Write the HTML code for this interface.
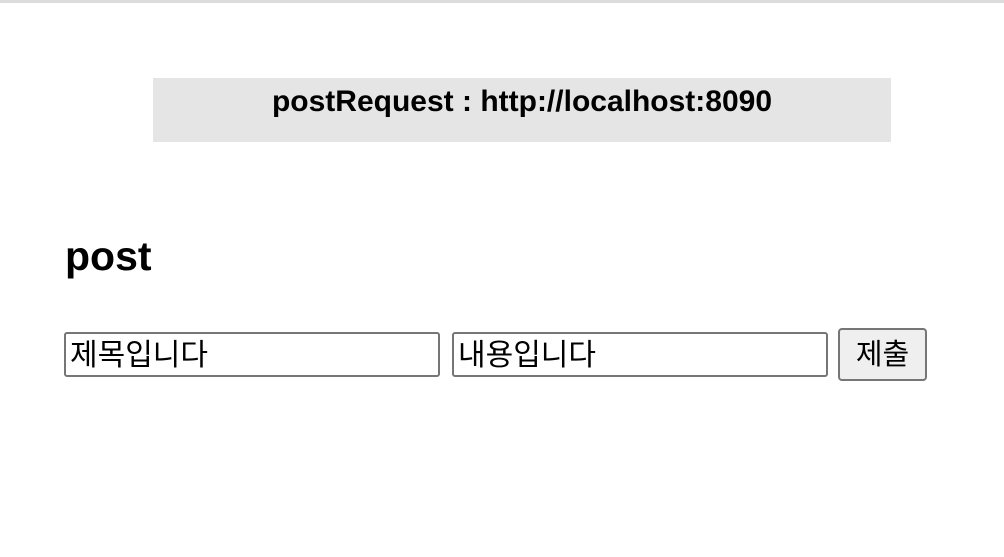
<!DOCTYPE html>
<html><head><meta charset="utf-8"><style>
body{margin:0;width:1004px;height:557px;background:#fff;position:relative;overflow:hidden;font-family:"Liberation Sans","Noto Sans CJK KR",sans-serif}
.top{position:absolute;left:0;top:0;width:1004px;height:3px;background:#dcdcdc}
.bar{position:absolute;left:153px;top:78px;width:738px;height:64px;background:#e5e5e5;text-align:center;font-weight:bold;font-size:30px;line-height:48px;color:#000}
h2{position:absolute;left:65px;top:228px;margin:0;font-size:41px;font-weight:bold;line-height:56px}
.in{position:absolute;top:332px;height:41px;border:2px solid #767676;border-radius:3px;box-sizing:content-box;font-size:30px;line-height:43px;padding-left:4px;width:368px}
.btn{position:absolute;left:838px;top:328px;width:85px;height:49px;border:2px solid #767676;border-radius:4px;background:#efefef;font-size:29px;line-height:51px;text-align:center}
</style></head><body>
<div class="top"></div>
<div class="bar">postRequest : http://localhost:8090</div>
<h2>post</h2>
<div class="in" style="left:64px">제목입니다</div>
<div class="in" style="left:452px">내용입니다</div>
<div class="btn">제출</div>
</body></html>
